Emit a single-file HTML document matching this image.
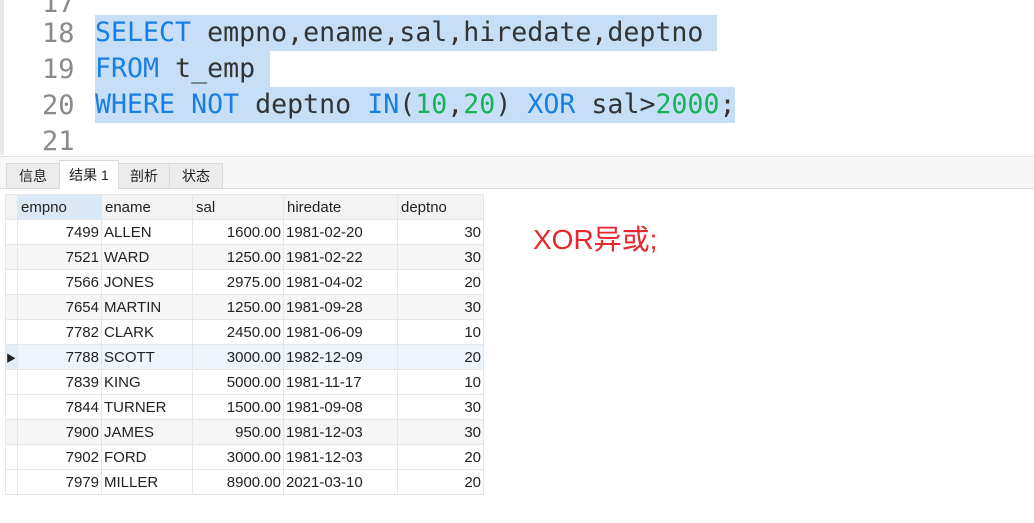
<!DOCTYPE html>
<html><head><meta charset="utf-8"><style>
body{margin:0;width:1034px;height:523px;background:#fff;position:relative;overflow:hidden;font-family:"Liberation Sans","Noto Sans CJK SC",sans-serif}
.ed{position:absolute;left:0;top:0;width:1034px;height:155px;background:#fff;border-left:4px solid #e8e8e8;box-sizing:border-box}
.ln{position:absolute;left:38px;font:27px "DejaVu Sans Mono","Liberation Mono",monospace;color:#8a8a8a}
.cd{position:absolute;left:91px;font:26.6px "DejaVu Sans Mono","Liberation Mono",monospace;color:#333;white-space:pre;background:#c6dff6;height:36px;line-height:36px}
.k{color:#1a7ee0}.n{color:#18b058}
.tabs{position:absolute;left:0;top:156px;width:1034px;height:31px;background:#f7f7f7;border-top:1px solid #e4e4e4;border-bottom:1px solid #dcdcdc}
.tab{position:absolute;top:6px;height:24px;line-height:24px;font-size:14px;color:#222;background:#ececec;border:1px solid #d8d8d8;text-align:center}
table{position:absolute;left:5px;top:194px;border-collapse:collapse;font-size:15px;color:#222;table-layout:fixed;width:478px}
td{height:24px;padding:0 2px;border:1px solid #e6e6e6;white-space:nowrap;overflow:hidden}
.r{text-align:right}
tr.g td{background:#f6f6f6}
tr.s td{background:#eef4fb}
th{font-weight:normal;text-align:left;height:24px;padding:0 3px;border:1px solid #e6e6e6;background:#f3f3f3;overflow:hidden}
</style></head><body>
<div class="ed">
<div class="ln" style="top:-12px">17</div>
<div class="ln" style="top:18px">18</div>
<div class="ln" style="top:54px">19</div>
<div class="ln" style="top:90px">20</div>
<div class="ln" style="top:126px">21</div>
<div class="cd" style="top:15px;width:622px"><span class="k">SELECT</span> empno,ename,sal,hiredate,deptno</div>
<div class="cd" style="top:51px;width:175px"><span class="k">FROM</span> t_emp</div>
<div class="cd" style="top:87px;width:640px"><span class="k">WHERE NOT</span> deptno <span class="k">IN</span>(<span class="n">10</span>,<span class="n">20</span>) <span class="k">XOR</span> sal&gt;<span class="n">2000</span>;</div>
</div>
<div class="tabs">
<div class="tab" style="left:6px;width:52px">信息</div>
<div class="tab" style="left:59px;width:58px;background:#fff;top:3px;height:28px;border-bottom:none;line-height:28px">结果 1</div>
<div class="tab" style="left:118px;width:50px">剖析</div>
<div class="tab" style="left:169px;width:52px">状态</div>
</div>
<table>
<colgroup><col style="width:12px"><col style="width:84px"><col style="width:91px"><col style="width:91px"><col style="width:114px"><col style="width:86px"></colgroup>
<tr><th style="background:#f3f3f3;padding:0"></th><th style="background:#dbe9f7">empno</th><th>ename</th><th>sal</th><th>hiredate</th><th>deptno</th></tr>
<tr><td></td><td class="r">7499</td><td>ALLEN</td><td class="r">1600.00</td><td>1981-02-20</td><td class="r">30</td></tr>
<tr class="g"><td></td><td class="r">7521</td><td>WARD</td><td class="r">1250.00</td><td>1981-02-22</td><td class="r">30</td></tr>
<tr><td></td><td class="r">7566</td><td>JONES</td><td class="r">2975.00</td><td>1981-04-02</td><td class="r">20</td></tr>
<tr class="g"><td></td><td class="r">7654</td><td>MARTIN</td><td class="r">1250.00</td><td>1981-09-28</td><td class="r">30</td></tr>
<tr><td></td><td class="r">7782</td><td>CLARK</td><td class="r">2450.00</td><td>1981-06-09</td><td class="r">10</td></tr>
<tr class="s"><td style="background:#e3eef9;font-size:10px;padding:0">▶</td><td class="r">7788</td><td>SCOTT</td><td class="r">3000.00</td><td>1982-12-09</td><td class="r">20</td></tr>
<tr><td></td><td class="r">7839</td><td>KING</td><td class="r">5000.00</td><td>1981-11-17</td><td class="r">10</td></tr>
<tr><td></td><td class="r">7844</td><td>TURNER</td><td class="r">1500.00</td><td>1981-09-08</td><td class="r">30</td></tr>
<tr class="g"><td></td><td class="r">7900</td><td>JAMES</td><td class="r">950.00</td><td>1981-12-03</td><td class="r">30</td></tr>
<tr><td></td><td class="r">7902</td><td>FORD</td><td class="r">3000.00</td><td>1981-12-03</td><td class="r">20</td></tr>
<tr><td></td><td class="r">7979</td><td>MILLER</td><td class="r">8900.00</td><td>2021-03-10</td><td class="r">20</td></tr>
</table>
<div style="position:absolute;left:533px;top:218px;font-size:28px;color:#e8272b">XOR异或;</div>
</body></html>
